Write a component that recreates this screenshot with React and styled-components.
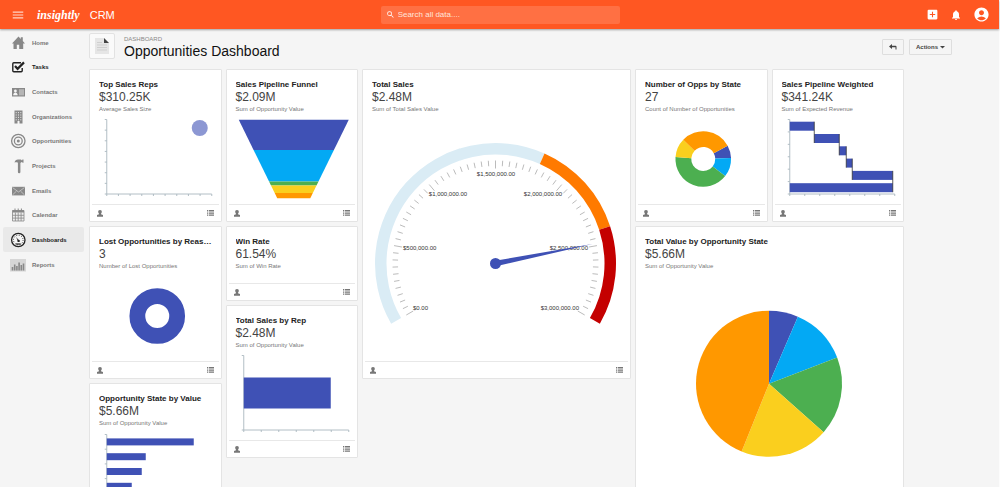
import React, { useState } from 'react'
import styled, { createGlobalStyle } from 'styled-components'
import { MdAccountCircle, MdAddBox, MdMenu, MdNotifications, MdSearch } from 'react-icons/md'

const blue = '#3f51b5'
const cyan = '#03a9f4'
const green = '#4caf50'
const yellow = '#facf1e'
const orange = '#ff9800'
const axisColor = '#a9b7be'

const GlobalStyle = createGlobalStyle`
  * {
    box-sizing: border-box;
  }
  body {
    margin: 0;
    background-color: #f5f5f5;
    font-family: "Liberation Sans", Arial, sans-serif;
  }
  button, input {
    font-family: inherit;
  }
`

// page shell
const Page = styled.div`
  height: 100vh;
  display: flex;
  flex-direction: column;
  border-right: 1px solid #fcfcfc;
`
const Content = styled.div`
  flex: 1;
  min-height: 0;
  display: flex;
`

// top bar
const TopBar = styled.header`
  flex: none;
  height: 29px;
  display: flex;
  align-items: center;
  background-color: #ff5722;
  color: white;
  box-shadow: 0 1px 2px rgba(0, 0, 0, 0.35);
  z-index: 1;
`
const TopLeft = styled.div`
  flex: 1;
  display: flex;
  align-items: center;
  padding-left: 11px;
`
const TopRight = styled.div`
  flex: 1;
  display: flex;
  align-items: center;
  justify-content: flex-end;
  gap: 11px;
  padding-right: 9px;
`
const IconButton = styled.button`
  display: flex;
  padding: 0;
  border: none;
  background: none;
  color: ${({ $color }) => $color || 'white'};
  cursor: pointer;
`
const Logo = styled.a`
  margin-left: 12px;
  font-family: "Liberation Serif", "Times New Roman", serif;
  font-size: 12px;
  font-weight: bold;
  font-style: italic;
  line-height: 14px;
  color: white;
  text-decoration: none;
`
const Product = styled.span`
  margin-left: 10px;
  font-size: 11px;
  line-height: 14px;
`
const SearchBox = styled.label`
  width: 24%;
  height: 18px;
  display: flex;
  align-items: center;
  gap: 3px;
  padding: 0 5px;
  border-radius: 2px;
  background-color: #ff7043;
`
const SearchInput = styled.input`
  flex: 1;
  min-width: 0;
  padding: 0;
  border: none;
  outline: none;
  background: none;
  color: white;
  font-size: 8px;
  &::placeholder {
    color: #ffe4db;
  }
`

// side navigation
const Nav = styled.nav`
  flex: none;
  width: 85px;
  display: grid;
  grid-auto-rows: 25px 24px 25px;
  align-content: start;
  padding: 1px 1px 0 3px;
`
const NavLink = styled.a`
  display: flex;
  align-items: center;
  gap: 6px;
  padding-left: 7px;
  border-radius: 2px;
  background-color: ${({ $active }) => ($active ? '#e9e9e9' : 'transparent')};
  color: ${({ $color }) => $color};
  font-size: 6px;
  font-weight: bold;
  text-decoration: none;
`
const NavIcon = styled.svg`
  width: 16px;
  height: 16px;
  flex: none;
  color: ${({ $color }) => $color};
`

// dashboard
const Main = styled.main`
  flex: 1;
  min-width: 0;
  overflow-y: auto;
  scrollbar-width: none;
`
const PageHeader = styled.div`
  display: flex;
  align-items: flex-start;
  padding: 4px 47px 10px 4px;
`
const PageIcon = styled.div`
  width: 26px;
  height: 26px;
  display: flex;
  align-items: center;
  justify-content: center;
  border: 1px solid #e2e2e2;
  border-radius: 2px;
  background-color: #fafafa;
`
const Heading = styled.div`
  flex: 1;
  padding: 2px 0 0 9px;
`
const Kicker = styled.div`
  font-size: 6px;
  line-height: 8px;
  color: #888;
`
const PageTitle = styled.h1`
  margin: 0;
  font-size: 14px;
  font-weight: normal;
  line-height: 16px;
  color: #111;
`
const HeaderActions = styled.div`
  display: flex;
  gap: 5px;
  padding-top: 6px;
`
const ActionButton = styled.button`
  height: 16px;
  display: flex;
  align-items: center;
  gap: 2px;
  padding: 0 6px;
  border: 1px solid #dedede;
  border-radius: 1px;
  background-color: #f5f5f5;
  color: #444;
  font-size: 6px;
  font-weight: bold;
  cursor: pointer;
`
const Grid = styled.div`
  display: grid;
  grid-template-columns: repeat(6, minmax(0, 1fr));
  grid-auto-rows: 75px 74px;
  gap: 4px;
  padding: 0 95px 4px 4px;
`

// card
const CardBox = styled.section`
  grid-column: ${({ $col }) => $col};
  grid-row: ${({ $row }) => $row};
  min-height: 0;
  display: flex;
  flex-direction: column;
  border: 1px solid #e4e4e4;
  border-radius: 1px;
  background-color: white;
`
const CardHead = styled.div`
  padding: 9px 6px 0 9px;
`
const CardTitle = styled.h2`
  margin: 0;
  overflow: hidden;
  text-overflow: ellipsis;
  white-space: nowrap;
  font-size: 8px;
  line-height: 11px;
  color: #222;
`
const CardValue = styled.div`
  font-size: 12px;
  line-height: 15px;
  color: #444;
`
const CardNote = styled.div`
  font-size: 6px;
  line-height: 9px;
  color: #777;
`
const CardBody = styled.div`
  flex: 1;
  min-height: 0;
`
const Chart = styled.svg`
  display: block;
  width: 100%;
  height: 100%;
`
const GaugeLabel = styled.text`
  font-size: 6px;
  fill: #333;
`
const CardFooter = styled.div`
  height: 17px;
  display: flex;
  align-items: center;
  justify-content: space-between;
  margin: 0 2px;
  padding: 0 5px;
  border-top: 1px solid #e8e8e8;
`

const navItems = [
  {
    name: 'Home',
    icon: (
      <path d="M8.5 1.5 2 8.5h1.5V14h3.3V9.800h2.400V14h4V8.500H15L12.800 6V2.200h-2V4z" fill="currentColor" />
    ),
  },
  {
    name: 'Tasks',
    dark: true,
    icon: (
      <>
        <path d="M11 3.800H3.800a1 1 0 0 0-1 1v6.900a1 1 0 0 0 1 1h7.400a1 1 0 0 0 1-1V9" fill="none" stroke="currentColor" strokeWidth="1.4" />
        <path d="m5 7 2.600 2.800L14 3.400" fill="none" stroke="currentColor" strokeWidth="2.2" />
      </>
    ),
  },
  {
    name: 'Contacts',
    icon: (
      <>
        <rect x="2" y="4" width="13" height="8.5" fill="currentColor" />
        <circle cx="5.4" cy="7" r="1.4" fill="#f5f5f5" />
        <path d="M3.200 11.300c0-3.600 4.400-3.600 4.400 0z" fill="#f5f5f5" />
        <path d="M9 5.200h5v6.200H9z" fill="#b5b5b5" />
      </>
    ),
  },
  {
    name: 'Organizations',
    icon: (
      <>
        <path d="M4.500 1.500h8v13h-3v-2.400h-2v2.400h-3z" fill="currentColor" />
        <path d="M6.200 3v8.500M8.500 3v8.500M10.800 3v8.500" stroke="#f5f5f5" strokeWidth="0.8" strokeDasharray="1.2 1.2" />
      </>
    ),
  },
  {
    name: 'Opportunities',
    icon: (
      <g fill="none" stroke="currentColor" strokeWidth="1.3">
        <circle cx="8.3" cy="8" r="6.7" />
        <circle cx="8.3" cy="8" r="3.9" />
        <circle cx="8.3" cy="8" r="1.5" fill="currentColor" stroke="none" />
      </g>
    ),
  },
  {
    name: 'Projects',
    icon: (
      <path d="M4.500 4.600C5 2.400 6.200 1.500 8 1.500h3l.5.7h.8v-.8h1.200v3.400h-1.200V4h-.8l-.5.7h-.6V14a1.200 1.200 0 0 1-2.500 0V4.700c-1.200-.6-2.300-.6-3.400-.1z" fill="currentColor" />
    ),
  },
  {
    name: 'Emails',
    icon: (
      <>
        <rect x="2" y="3.8" width="13" height="8.6" fill="currentColor" />
        <path d="m2.500 4.500 6 4.500 6-4.500M2.500 11.900l4-3.800m8 3.800-4-3.800" fill="none" stroke="#d5d5d5" strokeWidth="0.7" />
      </>
    ),
  },
  {
    name: 'Calendar',
    icon: (
      <>
        <path d="M2.500 3.500h11.500V14H2.500z" fill="#ededed" stroke="currentColor" strokeWidth="0.8" />
        <path d="M2.500 3.200h11.500v2.300H2.500z" fill="currentColor" />
        <path d="M5 1.500v3M8.200 1.500v3M11.400 1.500v3" stroke="currentColor" strokeWidth="1" />
        <path d="M2.500 8.300H14M2.500 11.100H14M5.400 5.500V14M8.200 5.500V14M11.100 5.500V14" stroke="currentColor" strokeWidth="0.8" />
      </>
    ),
  },
  {
    name: 'Dashboards',
    dark: true,
    active: true,
    icon: (
      <>
        <circle cx="8.3" cy="8" r="6.7" fill="#f5f5f5" stroke="currentColor" strokeWidth="1.3" />
        <circle cx="8.3" cy="8" r="4.8" fill="none" stroke="currentColor" strokeWidth="1" strokeDasharray="0.9 1.6" />
        <path d="m6 5 3.200 3.400-1 1z" fill="currentColor" />
        <circle cx="8.6" cy="8.9" r="1.2" fill="currentColor" />
        <path d="M6 12h4.600" stroke="currentColor" strokeWidth="1.2" />
      </>
    ),
  },
  {
    name: 'Reports',
    icon: (
      <>
        <rect x="0" y="2" width="16" height="12.5" fill="#d6d6d6" />
        <path d="M2.500 13.500V10M4.700 13.500V7.500M6.900 13.500V9M9.100 13.500V5.500M11.300 13.500V8M13.500 13.500V6.500" stroke="currentColor" strokeWidth="1.6" />
      </>
    ),
  },
]

// point on a circle, angle in degrees clockwise from the top
const polar = (cx, cy, r, angle) => {
  const rad = (angle * Math.PI) / 180
  return [cx + r * Math.sin(rad), cy - r * Math.cos(rad)]
}

const arcPath = (cx, cy, outer, inner, from, to) => {
  const large = to - from > 180 ? 1 : 0
  const [x1, y1] = polar(cx, cy, outer, from)
  const [x2, y2] = polar(cx, cy, outer, to)
  const [x3, y3] = polar(cx, cy, inner, to)
  const [x4, y4] = polar(cx, cy, inner, from)
  return `M${x1} ${y1}A${outer} ${outer} 0 ${large} 1 ${x2} ${y2}L${x3} ${y3}A${inner} ${inner} 0 ${large} 0 ${x4} ${y4}Z`
}

// left and bottom axis with tick marks
function Axes({ rows, cols, top = 5.5 }) {
  const left = 16.5
  const bottom = 80
  const right = 121.5
  let d = `M${left} ${top}V${bottom}H${right}`
  for (let i = 0; i <= rows; i++) {
    d += `M${left - 2} ${top + ((bottom - top) * i) / rows}h2`
  }
  for (let i = 0; i <= cols; i++) {
    d += `M${left + ((right - left) * i) / cols} ${bottom}v2`
  }
  return <path d={d} fill="none" stroke={axisColor} strokeWidth="0.9" />
}

function BubbleChart() {
  return (
    <Chart viewBox="0 0 130 90">
      <Axes rows={7} cols={9} />
      <circle cx="109.5" cy="14" r="8" fill="#8c97d3" />
    </Chart>
  )
}

function FunnelChart() {
  return (
    <Chart viewBox="0 0 130 90">
      <clipPath id="funnel">
        <path d="M11.500 5.700H121.500L83 84.300H50Z" />
      </clipPath>
      <g clipPath="url(#funnel)">
        <rect x="10" y="5" width="114" height="31" fill={blue} />
        <rect x="10" y="36" width="114" height="31.5" fill={cyan} />
        <rect x="10" y="67.5" width="114" height="4" fill={green} />
        <rect x="10" y="71.5" width="114" height="7.5" fill={yellow} />
        <rect x="10" y="79" width="114" height="6" fill={orange} />
      </g>
    </Chart>
  )
}

const gaugeLabels = [
  { text: '$0.00', x: 50, y: 196, anchor: 'start' },
  { text: '$500,000.00', x: 40, y: 136, anchor: 'start' },
  { text: '$1,000,000.00', x: 85, y: 82, anchor: 'middle' },
  { text: '$1,500,000.00', x: 133, y: 62, anchor: 'middle' },
  { text: '$2,000,000.00', x: 180, y: 82, anchor: 'middle' },
  { text: '$2,500,000.00', x: 225, y: 136, anchor: 'end' },
  { text: '$3,000,000.00', x: 216, y: 196, anchor: 'end' },
]

function GaugeChart() {
  const cx = 132.5
  const cy = 149.5
  const ticks = []
  for (let i = 0; i <= 60; i++) {
    const angle = -120 + i * 4
    const [x1, y1] = polar(cx, cy, 103, angle)
    const [x2, y2] = polar(cx, cy, i % 10 === 0 ? 95 : 97.5, angle)
    ticks.push(`M${x1} ${y1}L${x2} ${y2}`)
  }
  return (
    <Chart viewBox="0 0 267 247">
      <path d={arcPath(cx, cy, 120.5, 109, -120, 24)} fill="#daecf5" />
      <path d={arcPath(cx, cy, 120.5, 109, 24, 72)} fill="#ff7a00" />
      <path d={arcPath(cx, cy, 120.5, 109, 72, 120)} fill="#c40000" />
      <path d={ticks.join('')} stroke="#aaa" strokeWidth="0.8" />
      {gaugeLabels.map((label) => (
        <GaugeLabel key={label.text} x={label.x} y={label.y} textAnchor={label.anchor}>
          {label.text}
        </GaugeLabel>
      ))}
      <path d="M132 146.700 229.500 130 133 152.300Z" fill={blue} />
      <circle cx={cx} cy={cy} r="5.5" fill={blue} />
    </Chart>
  )
}

function DonutChart({ slices }) {
  return (
    <Chart viewBox="0 0 130 90">
      {slices.map((s) => (
        <path key={s.from} d={arcPath(67, 45, 27.8, 12, s.from, s.to)} fill={s.color} />
      ))}
    </Chart>
  )
}

// a single value fills the whole ring
function RingChart() {
  return (
    <Chart viewBox="0 0 130 90">
      <circle cx="67" cy="45" r="19.9" fill="none" stroke={blue} strokeWidth="15.8" />
    </Chart>
  )
}

const stateSlices = [
  { from: 61.3, to: 88, color: blue },
  { from: 88, to: 128, color: cyan },
  { from: 128, to: 274, color: green },
  { from: 274, to: 314, color: yellow },
  { from: 314, to: 421.3, color: orange },
]

const steps = [
  [16.5, 41],
  [41, 66],
  [66, 73],
  [73, 79],
  [79, 119.5],
  [16.5, 119.5],
]

function WaterfallChart() {
  return (
    <Chart viewBox="0 0 130 90">
      <Axes rows={6} cols={7} />
      {steps.map(([from, to], i) => (
        <rect key={i} x={from} y={7.7 + i * 12.3} width={to - from} height="9" fill={blue} />
      ))}
      {steps.slice(0, 5).map(([, to], i) => (
        <path key={i} d={`M${to} ${7.7 + i * 12.3}v21.3`} stroke="#333" strokeWidth="0.8" />
      ))}
    </Chart>
  )
}

function BarChart({ bars, height, top, step, rows, cols }) {
  return (
    <Chart viewBox="0 0 130 90">
      <Axes rows={rows} cols={cols} top={top} />
      {bars.map((width, i) => (
        <rect key={i} x="16.5" y={top + (step - height) / 2 + i * step} width={width} height={height} fill={blue} />
      ))}
    </Chart>
  )
}

const pieSlices = [
  { from: 0, to: 23.3, color: blue },
  { from: 23.3, to: 69, color: cyan },
  { from: 69, to: 131.6, color: green },
  { from: 131.6, to: 202, color: yellow },
  { from: 202, to: 360, color: orange },
]

function PieChart() {
  return (
    <Chart viewBox="0 0 267 247">
      {pieSlices.map((s) => (
        <path key={s.from} d={arcPath(133, 112.7, 73, 0, s.from, s.to)} fill={s.color} />
      ))}
    </Chart>
  )
}

function Card({ title, value, note, col, row, children }) {
  return (
    <CardBox $col={col} $row={row}>
      <CardHead>
        <CardTitle>{title}</CardTitle>
        <CardValue>{value}</CardValue>
        <CardNote>{note}</CardNote>
      </CardHead>
      <CardBody>{children}</CardBody>
      <CardFooter>
        <IconButton $color="#777" aria-label={`${title} owner`}>
          <svg width="6" height="7" viewBox="0 0 6 7" fill="currentColor">
            <path d="M3 0C4.400 0 4.900.8 4.800 1.900 4.700 2.800 4.200 3.200 4 3.700v.6L6 5V6.700H0V5l2-.7v-.6C1.800 3.200 1.300 2.800 1.200 1.900 1.100.8 1.600 0 3 0z" />
          </svg>
        </IconButton>
        <IconButton $color="#777" aria-label={`${title} details`}>
          <svg width="7" height="6" viewBox="0 0 7 6" fill="currentColor">
            <path d="M0 0h1.300v1H0zM2 0h5v1H2zM0 1.600h1.300v1H0zM2 1.600h5v1H2zM0 3.200h1.300v1H0zM2 3.200h5v1H2zM0 4.800h1.300v1H0zM2 4.800h5v1H2z" />
          </svg>
        </IconButton>
      </CardFooter>
    </CardBox>
  )
}

function Header() {
  const [query, setQuery] = useState('')

  return (
    <TopBar>
      <TopLeft>
        <IconButton $color="#ffd5c8" aria-label="Menu">
          <MdMenu size={14} />
        </IconButton>
        <Logo href="#home">insightly</Logo>
        <Product>CRM</Product>
      </TopLeft>
      <SearchBox>
        <MdSearch size={9} />
        <SearchInput
          type="text"
          aria-label="Search all data"
          placeholder="Search all data...."
          value={query}
          onChange={(e) => setQuery(e.target.value)}
        />
      </SearchBox>
      <TopRight>
        <IconButton aria-label="Add">
          <MdAddBox size={13} />
        </IconButton>
        <IconButton aria-label="Notifications">
          <MdNotifications size={12} />
        </IconButton>
        <IconButton aria-label="Account">
          <MdAccountCircle size={17} />
        </IconButton>
      </TopRight>
    </TopBar>
  )
}

export default function App() {
  return (
    <Page>
      <GlobalStyle />
      <Header />
      <Content>
        <Nav>
          {navItems.map((item) => (
            <NavLink
              key={item.name}
              href={`#${item.name.toLowerCase()}`}
              $active={item.active}
              $color={item.dark ? '#222' : '#777'}
            >
              <NavIcon viewBox="0 0 16 16" $color={item.dark ? '#222' : '#888'}>
                {item.icon}
              </NavIcon>
              {item.name}
            </NavLink>
          ))}
        </Nav>
        <Main>
          <PageHeader>
            <PageIcon>
              <svg width="14" height="18" viewBox="0 0 14 18">
                <path d="M0 1h9l5 5v11H0z" fill="#e6e6e6" />
                <path d="M9 1l5 5H9z" fill="#444" />
                <path d="M2 5.500h5M2 8h10M2 10.500h10M2 13h10" stroke="#cfcfcf" />
              </svg>
            </PageIcon>
            <Heading>
              <Kicker>DASHBOARD</Kicker>
              <PageTitle>Opportunities Dashboard</PageTitle>
            </Heading>
            <HeaderActions>
              <ActionButton aria-label="Back">
                <svg width="8" height="6" viewBox="0 0 8 6">
                  <path d="M0 2.500 3 0v1.800h3.500a1 1 0 0 1 1 1V5.500h-1V3.200H3V5z" fill="currentColor" />
                </svg>
              </ActionButton>
              <ActionButton>
                Actions
                <svg width="5" height="3" viewBox="0 0 5 3">
                  <path d="M0 0h5L2.500 2.500z" fill="currentColor" />
                </svg>
              </ActionButton>
            </HeaderActions>
          </PageHeader>
          <Grid>
            <Card title="Top Sales Reps" value="$310.25K" note="Average Sales Size" col="1" row="1 / span 2">
              <BubbleChart />
            </Card>
            <Card title="Sales Pipeline Funnel" value="$2.09M" note="Sum of Opportunity Value" col="2" row="1 / span 2">
              <FunnelChart />
            </Card>
            <Card title="Total Sales" value="$2.48M" note="Sum of Total Sales Value" col="3 / span 2" row="1 / span 4">
              <GaugeChart />
            </Card>
            <Card title="Number of Opps by State" value="27" note="Count of Number of Opportunities" col="5" row="1 / span 2">
              <DonutChart slices={stateSlices} />
            </Card>
            <Card title="Sales Pipeline Weighted" value="$341.24K" note="Sum of Expected Revenue" col="6" row="1 / span 2">
              <WaterfallChart />
            </Card>
            <Card title="Lost Opportunities by Reasons" value="3" note="Number of Lost Opportunities" col="1" row="3 / span 2">
              <RingChart />
            </Card>
            <Card title="Win Rate" value="61.54%" note="Sum of Win Rate" col="2" row="3" />
            <Card title="Total Sales by Rep" value="$2.48M" note="Sum of Opportunity Value" col="2" row="4 / span 2">
              <BarChart bars={[87]} height={31} top={5.5} step={75} rows={1} cols={6} />
            </Card>
            <Card title="Opportunity State by Value" value="$5.66M" note="Sum of Opportunity Value" col="1" row="5 / span 2">
              <BarChart bars={[87, 39, 35, 25, 12]} height={7} top={6.5} step={14.8} rows={5} cols={6} />
            </Card>
            <Card title="Total Value by Opportunity State" value="$5.66M" note="Sum of Opportunity Value" col="5 / span 2" row="3 / span 4">
              <PieChart />
            </Card>
          </Grid>
        </Main>
      </Content>
    </Page>
  )
}
